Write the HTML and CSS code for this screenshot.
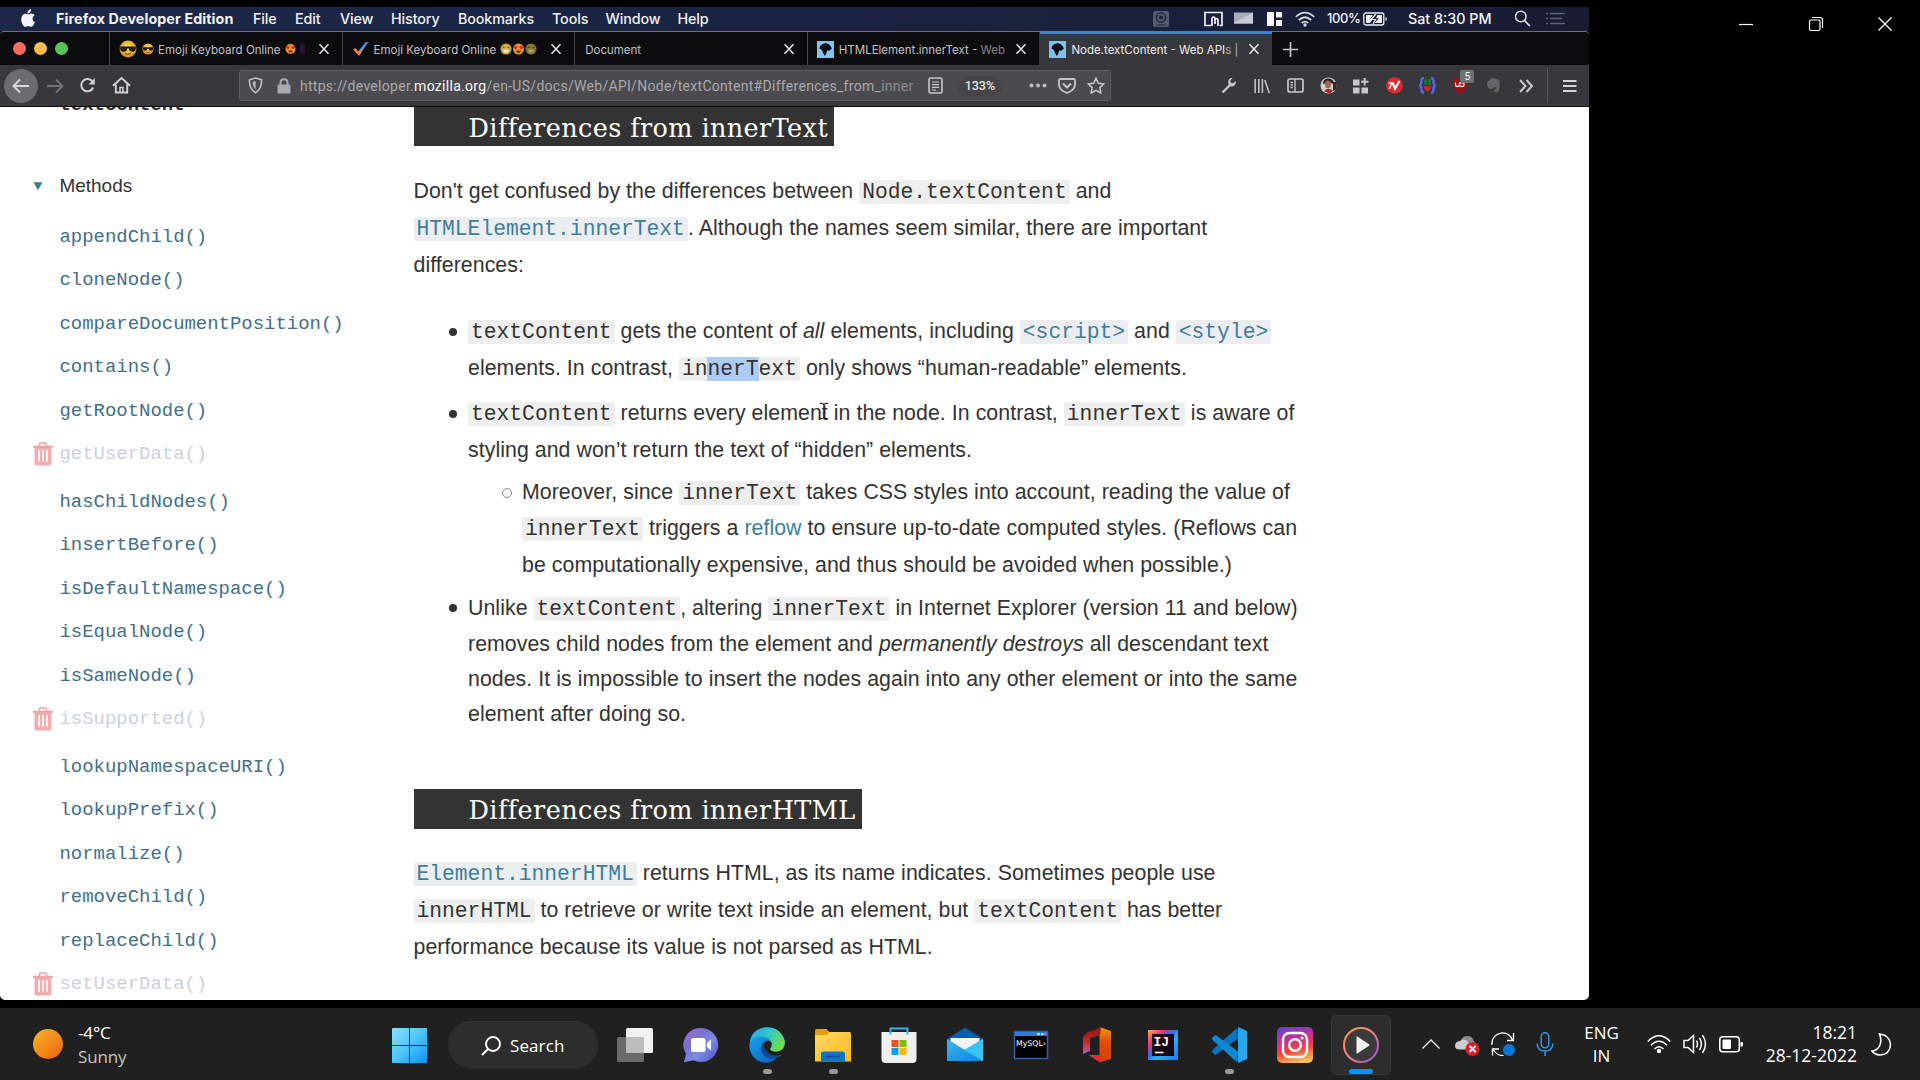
FILE: index.html
```html
<!DOCTYPE html>
<html lang="en">
<head>
<meta charset="utf-8">
<title>Node.textContent - Web APIs | MDN</title>
<link rel="stylesheet" href="styles.css">
</head>
<body>
<svg class="defs" width="0" height="0" aria-hidden="true">
  <defs>
    <radialGradient id="gFace" cx=".5" cy=".4" r=".6"><stop offset="0" stop-color="#ffe26a"/><stop offset="1" stop-color="#d98a1c"/></radialGradient>
    <linearGradient id="gSun" x1="0" y1="0" x2="1" y2="1"><stop offset="0" stop-color="#f5b62b"/><stop offset="1" stop-color="#f0620c"/></linearGradient>
    <linearGradient id="gWin" x1="0" y1="0" x2="1" y2="1"><stop offset="0" stop-color="#8be0fb"/><stop offset=".5" stop-color="#4cc5fb"/><stop offset="1" stop-color="#0b93f8"/></linearGradient>
    <linearGradient id="gChat" x1="0" y1="0" x2="1" y2="1"><stop offset="0" stop-color="#9d6fb5"/><stop offset=".35" stop-color="#7a70d0"/><stop offset=".6" stop-color="#7b8ae8"/><stop offset="1" stop-color="#4b4fc0"/></linearGradient>
    <linearGradient id="gEdge1" x1="0" y1="0" x2="1" y2=".5"><stop offset="0" stop-color="#2b9fe6"/><stop offset=".5" stop-color="#2fc4d4"/><stop offset="1" stop-color="#6be04e"/></linearGradient>
    <linearGradient id="gEdge2" x1="0" y1="0" x2="1" y2="1"><stop offset="0" stop-color="#1ba0e8"/><stop offset="1" stop-color="#0a5fc0"/></linearGradient>
    <linearGradient id="gFold" x1="0" y1="0" x2="1" y2="1"><stop offset="0" stop-color="#ffd768"/><stop offset="1" stop-color="#f9bb17"/></linearGradient>
    <linearGradient id="gMail" x1="0" y1="0" x2="1" y2="1"><stop offset="0" stop-color="#39b8ee"/><stop offset="1" stop-color="#1083da"/></linearGradient>
    <linearGradient id="gOff" x1="0" y1="0" x2="0" y2="1"><stop offset="0" stop-color="#f79a0a"/><stop offset=".4" stop-color="#e0500a"/><stop offset="1" stop-color="#d83b01"/></linearGradient>
    <linearGradient id="gOff2" x1="0" y1="0" x2="0" y2="1"><stop offset="0" stop-color="#8f1010"/><stop offset=".6" stop-color="#c4302f"/><stop offset="1" stop-color="#b565b8"/></linearGradient>
    <linearGradient id="gIJ" x1="0" y1="0" x2="1" y2="1"><stop offset="0" stop-color="#ffb03a"/><stop offset=".25" stop-color="#fb2d7c"/><stop offset=".45" stop-color="#2f6cf6"/><stop offset=".6" stop-color="#1fb2f5"/><stop offset="1" stop-color="#1f78f0"/></linearGradient>
    <linearGradient id="gIG" x1=".3" y1="0" x2=".55" y2="1"><stop offset="0" stop-color="#6b42cf"/><stop offset=".35" stop-color="#c9308f"/><stop offset=".65" stop-color="#f0453f"/><stop offset="1" stop-color="#fdc24f"/></linearGradient>
    <linearGradient id="gRing" x1="0" y1="0" x2="1" y2="1"><stop offset="0" stop-color="#ff9a3c"/><stop offset=".5" stop-color="#e8808a"/><stop offset="1" stop-color="#8a55cf"/></linearGradient>
    <linearGradient id="gTick" x1="0" y1="1" x2="1" y2="0"><stop offset="0" stop-color="#f0643c"/><stop offset=".4" stop-color="#e8875a"/><stop offset=".6" stop-color="#4a8fe8"/><stop offset="1" stop-color="#3b82f0"/></linearGradient>
    <symbol id="x" viewBox="0 0 12 12"><path d="M1.5 1.2l9 9.6M10.5 1.2l-9 9.6" stroke="#e8e8ea" stroke-width="1.5" fill="none"/></symbol>
    <symbol id="cool" viewBox="0 0 18 18"><circle cx="9" cy="9" r="8.4" fill="url(#gFace)"/><path d="M1.2 6.5h15.6v2.3q-.6 3-3.4 3T9.8 8.6H8.2q-.4 3.2-3.6 3.2t-3.4-3z" fill="#1d1b1a"/><path d="M6 13.6q3 1.4 6 0" stroke="#7a3d10" fill="none"/></symbol>
    <symbol id="love" viewBox="0 0 12 12"><circle cx="6" cy="6" r="5.5" fill="#e29a2c"/><path d="M.8 3.6Q2.8 1.6 3.4 3.4 5.3 2.4 5 4.4 4.4 6 2.9 6.4 1 5.6.8 3.6zM11.2 3.6Q9.2 1.6 8.6 3.4 6.7 2.4 7 4.4 7.6 6 9.1 6.4 11 5.6 11.2 3.6z" fill="#e8262d"/><path d="M3.5 7.6h5Q8 10 6 10T3.5 7.6z" fill="#6b2a10"/></symbol>
    <symbol id="laugh" viewBox="0 0 12 12"><circle cx="6" cy="6" r="5.5" fill="#dcaa3a"/><path d="M2.6 4.6q1-1 2 0M7.4 4.6q1-1 2 0" stroke="#5b3a10" fill="none"/><path d="M3 6.6h6Q8.6 9.8 6 9.8T3 6.6z" fill="#f1e7d0"/><path d="M.4 6.5L3 5.8 1.8 9zM11.6 6.5L9 5.8 10.2 9z" fill="#5aa7c8"/></symbol>
    <symbol id="mdn" viewBox="0 0 17 17"><path d="M0 0h17v17H0z" fill="#7ec4ea"/><path d="M2.4 7.6Q3 3 8 2.2q5.400 0 6.800 5.600l-2.800 1.900-1.700-.3-1 3-1.500 2.600-2-3.200-.6-2.500z" fill="#0c0d1c"/></symbol>
    <symbol id="trash" viewBox="0 0 20 24"><path d="M1.500 5h17v16.500q0 2-2 2h-13q-2 0-2-2z" fill="#f1acae"/><path d="M0 3.800h20v2H0z" fill="#eda3a5"/><path d="M6.500 4V2.200Q6.500 1 7.700 1h4.600q1.200 0 1.200 1.200V4" stroke="#eda3a5" stroke-width="1.600" fill="none"/><path d="M6 8v11.500M10 8v11.500M14 8v11.500" stroke="#fff" stroke-width="1.700"/></symbol>
  </defs>
</svg>

<div class="screen">
<main class="stage">
  <section class="mac">
    <header class="menubar">
      <svg class="apple" width="16" height="18" viewBox="0 0 16 18"><path d="M11 0q.2 2-1 3.300T7.400 4.500Q7.300 2.700 8.500 1.500T11 0zM8 5.300q.9 0 2-.5 2.900-.8 4.500 1.500-2 1.400-1.900 3.500.1 2.400 2.300 3.400-.8 2.200-2.200 3.900-1.200 1.200-2.800.4-1.700-.8-3.200 0-1.700.8-2.800-.3Q1.600 14.700 1.300 11.800.8 8 2.800 5.900 4.500 4.300 6.500 5q1 .3 1.500.3z" fill="#f4f5f8"/></svg>
      <strong class="app">Firefox Developer Edition</strong>
      <nav class="menus"><span>File</span><span>Edit</span><span>View</span><span>History</span><span>Bookmarks</span><span>Tools</span><span>Window</span><span>Help</span></nav>
      <div class="status">
        <svg width="18" height="18" viewBox="0 0 18 18"><rect x="1" y="1" width="16" height="16" rx="2.500" fill="#565b6e"/><circle cx="9" cy="7.500" r="4.600" fill="none" stroke="#1d243e" stroke-width="1.400"/><circle cx="9" cy="7.500" r="2" fill="#1d243e"/><path d="M4 15h10" stroke="#1d243e"/></svg>
        <svg width="20" height="16" viewBox="0 0 20 16"><path d="M7 14.500H1V1.500h17v13h-2.500M8 15V8q0-2 1.500-2T11 8v5M11 9q0-1.500 1.500-1.500T14 9v6" fill="none" stroke="#f2f3f7" stroke-width="1.700"/></svg>
        <svg width="20" height="12" viewBox="0 0 20 12"><rect width="19" height="11" y=".5" fill="#a9acb8"/><path d="M0 11L19 .5V11.500H0z" fill="#c9cbd4"/></svg>
        <svg width="16" height="16" viewBox="0 0 16 16"><path d="M0 1h7v14H0zM9 1h6v5.500H9zM9 9h6v6H9z" fill="#fafafc"/></svg>
        <svg width="20" height="16" viewBox="0 0 20 16"><path d="M.8 5.800Q10-2.600 19.200 5.800M3.800 9Q10 3.500 16.200 9M6.800 12Q10 9.200 13.200 12" fill="none" stroke="#d5d8e2" stroke-width="1.700"/><circle cx="10" cy="14" r="1.700" fill="#d5d8e2"/></svg>
        <span class="pct">100%</span>
        <svg width="25" height="14" viewBox="0 0 25 14"><rect x=".8" y="1" width="20" height="12" rx="2" fill="none" stroke="#eceef4" stroke-width="1.300"/><path d="M3 3h7L6.500 8h2.700L7 11H3zM14.500 3h4.500v8h-7.500L16 6.200h-3z" fill="#eceef4"/><path d="M13 2L8 7.500h4.500L10 12" fill="none" stroke="#eceef4" stroke-width="1.200"/><path d="M22.500 5v4q1.500-.5 1.500-2t-1.500-2z" fill="#eceef4"/></svg>
        <span class="clock">Sat 8:30 PM</span>
        <svg width="17" height="17" viewBox="0 0 17 17"><circle cx="6.800" cy="6.500" r="5.300" fill="none" stroke="#e3e5ec" stroke-width="1.500"/><path d="M10.500 10.500l5.300 5.500" stroke="#e3e5ec" stroke-width="1.800"/></svg>
        <svg width="20" height="13" viewBox="0 0 20 13"><path d="M4 1.500h15M4 6.500h12M4 11.500h15M0 1.500h2M0 6.500h2M0 11.500h2" stroke="#5c6175" stroke-width="1.500"/></svg>
      </div>
    </header>

    <div class="tabs">
      <div class="lights"><i class="red"></i><i class="amber"></i><i class="green"></i></div>
      <div class="tab"><svg width="18" height="18"><use href="#cool"/></svg><svg class="mini" width="12" height="12"><use href="#cool"/></svg><span class="label">Emoji Keyboard Online</span><svg class="mini2" width="11" height="12" viewBox="0 0 12 12"><use href="#love"/></svg><svg width="10" height="12" viewBox="0 0 10 12"><rect x="4" y="1" width="5" height="10" fill="#2c1030"/></svg><svg class="close" width="12" height="12"><use href="#x"/></svg></div>
      <div class="tab"><svg width="17" height="16" viewBox="0 0 17 16"><path d="M1 8.500l2.500-1.500 2.800 3.500L13.500 1h3L7 15z" fill="url(#gTick)"/></svg><span class="label">Emoji Keyboard Online</span><svg class="trio" width="40" height="12" viewBox="0 0 40 12"><use href="#laugh" width="12" height="12"/><use href="#love" x="12.500" width="12" height="12"/><g opacity=".65"><use href="#laugh" x="25" width="12" height="12"/></g></svg><svg class="close" width="12" height="12"><use href="#x"/></svg></div>
      <div class="tab"><span class="label doc">Document</span><svg class="close" width="12" height="12"><use href="#x"/></svg></div>
      <div class="tab"><svg width="17" height="17"><use href="#mdn"/></svg><span class="label wide">HTMLElement.innerText - <span class="dim">Web</span></span><svg class="close" width="12" height="12"><use href="#x"/></svg></div>
      <div class="tab active"><svg width="17" height="17"><use href="#mdn"/></svg><span class="label wide">Node.textContent - Web API<span class="dim">s |</span></span><svg class="close" width="12" height="12"><use href="#x"/></svg></div>
      <svg class="plus" width="15" height="15" viewBox="0 0 15 15"><path d="M7.500 0v15M0 7.500h15" stroke="#c4c4c8" stroke-width="1.700"/></svg>
    </div>

    <div class="toolbar">
      <div class="back"><svg width="18" height="16" viewBox="0 0 18 16"><path d="M17 8H2M8 1.500L1.500 8 8 14.500" fill="none" stroke="#d8d8dc" stroke-width="2"/></svg></div>
      <div class="tb"><svg width="18" height="16" viewBox="0 0 18 16"><path d="M1 8h15M10 1.500L16.500 8 10 14.500" fill="none" stroke="#727277" stroke-width="1.900"/></svg></div>
      <div class="tb"><svg width="17" height="17" viewBox="0 0 17 17"><path d="M14.200 10.500A6.200 6.200 0 1 1 13.500 4.500" fill="none" stroke="#d0d0d4" stroke-width="2"/><path d="M15.800 1v6.500H9.500z" fill="#d0d0d4"/></svg></div>
      <div class="tb"><svg width="19" height="17" viewBox="0 0 19 17"><path d="M1 8.800L9.500 1 18 8.800M3.800 7.500V15.500h11.400V7.500" fill="none" stroke="#d0d0d4" stroke-width="1.900"/><path d="M8 15v-4.500h3V15" fill="none" stroke="#d0d0d4" stroke-width="1.500"/></svg></div>
      <div class="url">
        <svg class="shield" width="15" height="17" viewBox="0 0 15 17"><path d="M7.500 1l6 1.800q.5 9-6 13-6.500-4-6-13z" fill="none" stroke="#c2c2c6" stroke-width="1.600"/><path d="M7.500 4v8.500Q5 10 4.600 5z" fill="#c2c2c6"/></svg>
        <svg class="lock" width="14" height="16" viewBox="0 0 14 16"><rect x=".5" y="6.500" width="13" height="9" rx="1.300" fill="#aaaaae"/><path d="M3.500 7V4.500Q3.500 1.200 7 1.200t3.500 3.300V7" fill="none" stroke="#aaaaae" stroke-width="1.900"/></svg>
        <span class="addr">https://developer.<b>mozilla.org</b>/en-US/docs/Web/API/Node/textContent#Differences_from_<span class="fade">inner</span></span>
        <svg class="reader" width="15" height="17" viewBox="0 0 15 17"><rect x="1" y="1" width="13" height="15" rx="1.500" fill="none" stroke="#c6c6ca" stroke-width="1.600"/><path d="M4 5h7M4 7.700h7M4 10.400h7M4 13h4" stroke="#c6c6ca" stroke-width="1.200"/></svg>
        <span class="zoom">133%</span>
        <svg class="dots" width="18" height="5" viewBox="0 0 18 5"><g fill="#bcbcc0"><circle cx="2.500" cy="2.500" r="2"/><circle cx="9" cy="2.500" r="2"/><circle cx="15.500" cy="2.500" r="2"/></g></svg>
        <svg class="pocket" width="18" height="16" viewBox="0 0 18 16"><path d="M2.500 1h13q1.500 0 1.500 1.500V7q-.3 5-8 8Q1.300 12 1 7V2.500Q1 1 2.500 1z" fill="none" stroke="#c6c6ca" stroke-width="1.800"/><path d="M5 5.500l4 4 4-4" fill="none" stroke="#c6c6ca" stroke-width="2"/></svg>
        <svg width="18" height="17" viewBox="0 0 18 17"><path d="M9 1.200l2.300 5 5.500.6-4 3.800 1.100 5.400L9 13.300 4.100 16l1.100-5.400-4-3.800 5.500-.6z" fill="none" stroke="#c6c6ca" stroke-width="1.500"/></svg>
      </div>
      <div class="tools">
        <svg width="16" height="17" viewBox="0 0 16 17"><path d="M1.500 15.500L9 8" stroke="#c8c8cc" stroke-width="2.400"/><path d="M14.800 4L12 6.300 9.900 5.800 9.300 3.700 11.500 1Q7.500.8 7.200 4.500L7.600 8 9.500 9.500Q15.500 9.500 14.800 4z" fill="#c8c8cc"/></svg>
        <svg width="16" height="16" viewBox="0 0 16 16"><path d="M1.200 1v14M4.800 1v14M8.400 1v14M10.800 2l4.400 13" stroke="#c0c0c4" stroke-width="1.600"/></svg>
        <svg width="17" height="15" viewBox="0 0 17 15"><rect x="1" y="1" width="15" height="13" rx="2" fill="none" stroke="#c8c8cc" stroke-width="1.700"/><path d="M8 1v13M3.500 4.500h2.300M3.500 7h2.300M3.500 9.500h2.300" stroke="#c8c8cc" stroke-width="1.300"/></svg>
        <svg width="17" height="17" viewBox="0 0 17 17"><circle cx="8.500" cy="8.500" r="8" fill="#d3d0c8"/><path d="M3 7Q3 1 9 1.500q5 .5 5 6L10 5.500z" fill="#2b201c"/><ellipse cx="8" cy="7.500" rx="3" ry="4" fill="#9a6b50"/><path d="M4.500 14.500Q5 11.500 9 12l4 1.500-3 3z" fill="#a81e24"/><path d="M13 5h3.500v7L13 14z" fill="#3b2a22"/></svg>
        <svg width="16" height="16" viewBox="0 0 16 16"><path d="M0 1.500h6.500v6H0zM0 9.500h6.500v6H0zM8.500 9.500H15v6H8.500z" fill="#c8c8cc"/><path d="M11.700 0v7.500M8 3.700h7.500" stroke="#c8c8cc" stroke-width="2"/></svg>
        <svg width="17" height="17" viewBox="0 0 17 17"><circle cx="8.500" cy="8.500" r="8.300" fill="#dc2c34"/><path d="M2.500 5.800h3.300L5 8l-.8 3H2.500" fill="none" stroke="#fff" stroke-width="1.200"/><path d="M6.500 5.500l2.500 6 4.500-7.500" fill="none" stroke="#fff" stroke-width="2.200"/></svg>
        <svg width="17" height="17" viewBox="0 0 17 17"><path d="M5 1Q2.500 1 2.500 4T1.200 8.500q1.300 1 1.300 4T5 16M12 1q2.500 0 2.500 3t1.300 4.500q-1.300 1-1.300 4T12 16" fill="none" stroke="#5a62e6" stroke-width="2.600"/><path d="M5.200 2h2.600v6H5.200zM9.200 2h2.600v6H9.200z" fill="#1a7a30"/><path d="M5 9.500q1.800-1.500 3.500.3 1.700-1.800 3.500-.3.500 2.500-3.500 5Q4.500 12 5 9.500z" fill="#e02028"/></svg>
        <div class="ublock"><svg width="16" height="17" viewBox="0 0 16 17"><path d="M8 .6l7.300 2.200Q16 12.500 8 16.500 0 12.500.7 2.800z" fill="#a30d15"/><path d="M3.500 5.500v2q0 2 2 2t2-2v-2M7.500 7.500q0 2 2.300 2t2.200-2q0-2-2.200-2t-2.300 2z" fill="none" stroke="#f3e4e5" stroke-width="1.300"/></svg><span class="badge">5</span></div>
        <svg width="15" height="17" viewBox="0 0 15 17"><path d="M1 5.500L5 1.500q3-1 4.500.5l3.500.7q1.500 3.500.5 8.300-.7 4-3 4.300-3-.3-2.200-3h2.200l-.3-2.200-2.700.4Q6 13 3.500 12 1 10 1 5.500z" fill="#64656a"/></svg>
        <svg width="15" height="14" viewBox="0 0 15 14"><path d="M1 1l5.500 6L1 13M7.500 1L13 7l-5.500 6" fill="none" stroke="#c8c8cc" stroke-width="2"/></svg>
      </div>
      <div class="burger"><svg width="14" height="14" viewBox="0 0 14 14"><path d="M0 2h13.500M0 7h13.500M0 12h13.500" stroke="#d4d4d8" stroke-width="2"/></svg></div>
    </div>

    <div class="page">
      <aside class="sidebar">
        <div class="row current">textContent</div>
        <div class="row group"><i class="tri"></i>Methods</div>
        <div class="row">appendChild()</div>
        <div class="row">cloneNode()</div>
        <div class="row">compareDocumentPosition()</div>
        <div class="row">contains()</div>
        <div class="row">getRootNode()</div>
        <div class="row old"><svg width="20" height="24"><use href="#trash"/></svg>getUserData()</div>
        <div class="row">hasChildNodes()</div>
        <div class="row">insertBefore()</div>
        <div class="row">isDefaultNamespace()</div>
        <div class="row">isEqualNode()</div>
        <div class="row">isSameNode()</div>
        <div class="row old"><svg width="20" height="24"><use href="#trash"/></svg>isSupported()</div>
        <div class="row">lookupNamespaceURI()</div>
        <div class="row">lookupPrefix()</div>
        <div class="row">normalize()</div>
        <div class="row">removeChild()</div>
        <div class="row">replaceChild()</div>
        <div class="row old"><svg width="20" height="24"><use href="#trash"/></svg>setUserData()</div>
      </aside>
      <article class="article">
        <h3>Differences from innerText</h3>
        <p>Don't get confused by the differences between <code>Node.textContent</code> and<br><code class="link">HTMLElement.innerText</code>. Although the names seem similar, there are important<br>differences:</p>
        <ul class="list">
          <li><code>textContent</code> gets the content of <em>all</em> elements, including <code class="link">&lt;script&gt;</code> and <code class="link">&lt;style&gt;</code><br>elements. In contrast, <code>in<span class="sel">nerT</span>ext</code> only shows “human-readable” elements.</li>
          <li><code>textContent</code> returns every element<svg class="ibeam" width="10" height="18" viewBox="0 0 10 18"><path d="M1 1.500Q5 1 5 3.500q0-2.500 4-2M1 16.500q4 .5 4-2 0 2.500 4 2M5 3v12M3.500 11h3" fill="none" stroke="#222" stroke-width="1.200"/></svg> in the node. In contrast, <code>innerText</code> is aware of<br>styling and won’t return the text of “hidden” elements.
            <ul class="sub"><li>Moreover, since <code>innerText</code> takes CSS styles into account, reading the value of<br><code>innerText</code> triggers a <span class="link">reflow</span> to ensure up-to-date computed styles. (Reflows can<br>be computationally expensive, and thus should be avoided when possible.)</li></ul>
          </li>
          <li>Unlike <code>textContent</code>, altering <code>innerText</code> in Internet Explorer (version 11 and below)<br>removes child nodes from the element and <em>permanently destroys</em> all descendant text<span class="tight">nodes. It is impossible to insert the nodes again into any other element or into the same<br>element after doing so.</span></li>
        </ul>
        <h3 class="second">Differences from innerHTML</h3>
        <p><code class="link">Element.innerHTML</code> returns HTML, as its name indicates. Sometimes people use<br><code>innerHTML</code> to retrieve or write text inside an element, but <code>textContent</code> has better<br>performance because its value is not parsed as HTML.</p>
      </article>
    </div>
  </section>

  <div class="winctl">
    <svg width="16" height="16" viewBox="0 0 16 16"><path d="M1 8.500h14" stroke="#fff" stroke-width="1.200"/></svg>
    <svg width="16" height="16" viewBox="0 0 16 16"><rect x="1.500" y="4" width="10.500" height="10.500" rx="1.500" fill="none" stroke="#fff" stroke-width="1.200"/><path d="M4 1.500h8q2.500 0 2.500 2.500v8" fill="none" stroke="#fff" stroke-width="1.200"/></svg>
    <svg width="16" height="16" viewBox="0 0 16 16"><path d="M1.500 1.500l13 13M14.500 1.500l-13 13" stroke="#fff" stroke-width="1.300"/></svg>
  </div>
</main>

<footer class="taskbar">
  <div class="weather"><svg width="30" height="30"><circle cx="15" cy="15" r="15" fill="url(#gSun)"/></svg><div><div>-4°C</div><div class="sub2">Sunny</div></div></div>
  <svg class="start" width="35" height="35" viewBox="0 0 35 35"><path d="M1 0h16v17H0V1q0-1 1-1zM18 0h16q1 0 1 1v16H18zM0 18h17v17H1q-1 0-1-1zM18 18h17v16q0 1-1 1H18z" fill="url(#gWin)"/></svg>
  <div class="search"><svg width="20" height="20" viewBox="0 0 20 20"><circle cx="12" cy="8" r="7" fill="none" stroke="#fff" stroke-width="1.900"/><path d="M7 13L1 19" stroke="#fff" stroke-width="2.200"/></svg><span>Search</span></div>
  <div class="apps">
    <div class="app"><svg viewBox="0 0 36 36"><rect x="9" y="1" width="27" height="25" rx="1.500" fill="#f2f2f2"/><rect y="10" width="27" height="25" rx="1.500" fill="#6a6a6a"/><path d="M9 10h18v16H9z" fill="#bdbdbd"/></svg></div>
    <div class="app"><svg viewBox="0 0 36 36"><path d="M18 1a17 17 0 1 1-7.500 32.200L.8 35.300 3 27A17 17 0 0 1 18 1z" fill="url(#gChat)"/><rect x="8" y="11" width="14.500" height="14" rx="2.500" fill="#fff"/><path d="M24 16l4-3.500v11L24 20z" fill="#fff"/></svg></div>
    <div class="app"><svg viewBox="0 0 36 36"><path d="M.5 16.500Q2 2 17 0.200 32 0 35.800 14q1 9.500-8.300 10.700-6-.2-6.500-3 2.500-3 1.500-6Q20 11 13 11 4 11 .5 16.500z" fill="url(#gEdge1)"/><path d="M.3 17.500Q3.500 8.800 13 9.500q7.500 1 9 5-4-2-7.500 1.500-3.500 4-.5 9.500 4 6.500 13.500 5.500Q23 36 17 35.800 1 34 .3 17.500z" fill="url(#gEdge2)"/><path d="M14.500 16q-4.500 4.500-1.500 10 4.500 7 12 5.500 6-1 8.500-4.500-7 3-12.500.3Q15 24 14.500 16z" fill="#124a94"/></svg><i></i></div>
    <div class="app"><svg viewBox="0 0 36 36"><path d="M0 4q0-2 2-2h9.500L15 5.500h20v4H0z" fill="#e3a008"/><path d="M0 8h12l3-3h19.500Q36 5 36 7v27.500H0z" fill="url(#gFold)"/><path d="M6 34.500V27q0-2.500 3-2.500h18q3 0 3 2.500v7.500z" fill="#0f74cc"/><path d="M11 29.500h14" stroke="#0a4e94" stroke-width="1.800"/></svg><i></i></div>
    <div class="app"><svg viewBox="0 0 36 36"><path d="M.5 5h35v27q0 4-4 4h-27q-4 0-4-4z" fill="#efefef"/><path d="M9.500 7.500v-6h17v6" fill="none" stroke="#36b7ea" stroke-width="2"/><path d="M10.500 13h7v7h-7z" fill="#f1511b"/><path d="M18.500 13h7v7h-7z" fill="#80bb0a"/><path d="M10.500 21h7v7h-7z" fill="#06a4ee"/><path d="M18.500 21h7v7h-7z" fill="#fbb90c"/></svg></div>
    <div class="app"><svg viewBox="0 0 36 36"><path d="M0 12L18 .5 36 12v10H0z" fill="#0b5cae"/><path d="M3.500 11h29v12H3.500z" fill="#f3f3f3"/><path d="M0 12l18 11L36 12v22H0z" fill="url(#gMail)"/><path d="M36 12L17 23l19 11z" fill="#37c4f5"/></svg></div>
    <div class="app"><svg viewBox="0 0 36 36"><rect x="1.500" y="4.500" width="33" height="27" fill="#000" stroke="#2f5fae" stroke-width="1.500"/><path d="M2 5h32v4H2z" fill="#2a7de0"/><path d="M24 6h3v2h-3zM28 6h2.500v2H28z" fill="#cfe0f5"/><path d="M31 6h2.500v2H31z" fill="#e8663c"/><text x="3" y="18.500" class="mysql">MySQL›</text></svg></div>
    <div class="app"><svg viewBox="0 0 36 36"><path d="M20.500 0L32 4v28l-11.500 3.500z" fill="url(#gOff)"/><path d="M22 0L8 5.500 4 10v17l7-3V11l10-3z" fill="url(#gOff2)"/><path d="M9.500 28H21v7.500z" fill="#e8273c"/></svg></div>
    <div class="app"><svg viewBox="0 0 36 36"><path d="M3 3h30v30H3z" fill="url(#gIJ)"/><path d="M7 7h22v22H7z" fill="#1a0613"/><text x="8.500" y="18.500" class="ij">IJ</text><path d="M10 25.500h8.500" stroke="#fff" stroke-width="1.600"/></svg></div>
    <div class="app"><svg viewBox="0 0 36 36"><path d="M26 1L2 22.500q-2 2 0 3.500l1.500 1.300q1 .7 2.200 0L27 11.500z" fill="#0b74bd"/><path d="M26 35.200L2 13.500q-2-2 0-3.500l1.500-1.300q1-.7 2.200 0L27 24.500z" fill="#1088d2"/><path d="M27 0l9 4v28l-9 4z" fill="#26a7f0"/></svg><i></i></div>
    <div class="app"><svg viewBox="0 0 36 36"><rect width="36" height="36" rx="5" fill="url(#gIG)"/><rect x="6" y="6" width="24" height="24" rx="6.500" fill="none" stroke="#fff" stroke-width="2.400"/><circle cx="18" cy="18" r="5.800" fill="none" stroke="#fff" stroke-width="2.400"/><circle cx="25" cy="11" r="1.600" fill="#fff"/></svg></div>
    <div class="app on"><svg viewBox="0 0 36 36"><circle cx="18" cy="18" r="17" fill="#3a3a3c" stroke="url(#gRing)" stroke-width="2"/><path d="M13.500 9.800q0-.8.800-.4L26 17.200q1 .8 0 1.600L14.300 26.500q-.8.400-.8-.4z" fill="#f1f1f1"/></svg><i></i></div>
  </div>
  <div class="tray">
    <svg class="chev" width="18" height="10" viewBox="0 0 18 10"><path d="M.5 9.500L9 1l8.500 8.500" fill="none" stroke="#fff" stroke-width="1.300"/></svg>
    <svg width="24" height="24" viewBox="0 0 24 24"><path d="M6 9q1-5 6.500-5 5 0 6.500 5.500 2 1 2 4H6z" fill="#8a8a8a"/><path d="M0 14q0-4.500 5-5 4-3 8 .5l3 8H5q-5 0-5-3.500z" fill="#cdcdcd"/><circle cx="17.500" cy="17" r="7" fill="#d32029"/><path d="M14.500 14l6 6M20.500 14l-6 6" stroke="#fff" stroke-width="1.800"/></svg>
    <svg width="24" height="24" viewBox="0 0 24 24"><path d="M.8 13Q.5 2.500 11 .8q7.500-.3 10.500 7.200M22.500 1v7.500H16M1.500 23.500V17H8M2.500 18q4 6 10 5.500" fill="none" stroke="#fff" stroke-width="1.300"/><circle cx="18" cy="18" r="6" fill="#0a78d6"/></svg>
    <svg class="mic" width="18" height="24" viewBox="0 0 18 24"><rect x="5.200" y=".8" width="7.600" height="15" rx="3.800" fill="none" stroke="#2f97ea" stroke-width="1.500"/><path d="M1 11.500Q1.500 19 9 19t8-7.500M9 19v5" fill="none" stroke="#2f97ea" stroke-width="1.500"/></svg>
    <div class="lang">ENG<br>IN</div>
    <svg width="24" height="20" viewBox="0 0 24 20"><path d="M.8 7.500Q12-4 23.200 7.500M4 11.300q8-8 16 0M7.500 15q4.500-4.500 9 0" fill="none" stroke="#fff" stroke-width="1.600"/><circle cx="12" cy="17" r="2.200" fill="#fff"/></svg>
    <svg width="24" height="20" viewBox="0 0 24 20"><path d="M1 6.500h4L10.500 1.500v17L5 13.500H1z" fill="none" stroke="#fff" stroke-width="1.500"/><path d="M13.500 6.500q2 3.500 0 7M16.500 4q3.800 6 0 12M19.500 1.200q6 8.800 0 17.600" fill="none" stroke="#fff" stroke-width="1.500"/></svg>
    <svg width="25" height="17" viewBox="0 0 25 17"><rect x=".8" y=".8" width="19.500" height="15" rx="3" fill="none" stroke="#fff" stroke-width="1.600"/><rect x="3.500" y="3.500" width="8.500" height="9.600" rx="1" fill="#fff"/><path d="M21.500 6h1.500q1 0 1 1v2.500q0 1-1 1h-1.500z" fill="#fff"/></svg>
    <div class="when">18:21<br>28-12-2022</div>
    <svg width="21" height="23" viewBox="0 0 21 23"><path d="M8.500 1q10 .8 11 10.500-.6 10-10.500 10.500-5.500-.3-8-4 5.500-.5 7.800-5.500Q11 7 8.500 1z" fill="none" stroke="#fff" stroke-width="1.600"/></svg>
  </div>
</footer>
</div>
</body>
</html>
```
FILE: styles.css
```css
* { box-sizing: border-box; }
body { margin: 0; background: #000; font-family: "Liberation Sans", Arial, sans-serif; overflow: hidden; }
svg { display: block; flex: none; }
.defs { position: absolute; }
.screen { width: 1920px; height: 1080px; display: flex; flex-direction: column; }
.stage { height: 1008px; display: flex; justify-content: space-between; align-items: flex-start; }

/* Shared desktop window */
.mac { width: 1589px; height: 993px; margin-top: 7px; display: flex; flex-direction: column; border-radius: 0 0 5px 5px; overflow: hidden; }

.menubar { height: 24px; flex: none; display: flex; align-items: center; padding: 0 0 1px 20px; background: linear-gradient(90deg, #1d2848, #1a2342 50%, #191c33); color: #f0f2f7; font: 500 14.3px/23px Inter, sans-serif; white-space: nowrap; }
.apple { margin-right: 20px; margin-top: -2px; }
.menubar .app { width: 198px; display: block; font-weight: 700; letter-spacing: .1px; }
.menus { display: grid; grid-template-columns: 42px 45px 51px 67px 94px 53.500px 72px 40px; letter-spacing: -.1px; margin-left: -1px; }
.status { margin-left: auto; margin-right: 23px; display: flex; align-items: center; }
.status svg:nth-child(1) { margin-right: 34px; }
.status svg:nth-child(2) { margin-right: 10px; }
.status svg:nth-child(3) { margin-right: 13px; margin-top: -2px; }
.status svg:nth-child(4) { margin-right: 12px; }
.status svg:nth-child(5) { margin-right: 12px; }
.pct { width: 36px; font-size: 13px; letter-spacing: -.4px; }
.clock { width: 106px; margin-left: 20px; }
.status svg:nth-child(9) { margin-right: 15px; }

.tabs { height: 34px; flex: none; display: flex; align-items: stretch; background: #0c0c0e; border-top: 1px solid #6d7079; border-radius: 4px 4px 0 0; }
.lights { width: 109px; padding-left: 13px; display: flex; align-items: center; gap: 8px; }
.lights i { width: 13px; height: 13px; border-radius: 50%; }
.red { background: #fb6a62; }
.amber { background: #fbbd4f; }
.green { background: #5cc155; }
.tab { width: 232.600px; display: flex; align-items: center; padding: 1px 12px 0 9px; border-left: 1px solid #4a4a4e; color: #c0c0c3; font: 11.500px/32px Inter, sans-serif; white-space: nowrap; }
.tab .close { margin-left: auto; }
.tab .label { margin-left: 5px; padding-top: 1px; }
.tab .doc { margin-left: 1px; }
.mini { margin-left: 5px; }
.tab .mini + .label { margin-left: 4px; }
.mini2, .trio { margin-left: 4px; }
.tab.active { background: #38383c; color: #eeeef0; border-left-color: #38383c; box-shadow: 0 -1px #2b86e4, inset 0 2px #2b86e4; }
.dim { opacity: .65; }
.plus { margin: 10px 0 0 11px; }

.toolbar { height: 42px; flex: none; display: flex; align-items: center; padding-left: 4px; background: #38383c; border-bottom: 1px solid #0a0a0c; }
.back { width: 34px; height: 34px; border-radius: 50%; background: #6b6b70; display: grid; place-items: center; }
.tb { width: 33.300px; display: grid; place-items: center; }
.url { width: 872px; height: 31px; margin-left: 101px; padding-left: 8px; display: flex; align-items: center; background: #4a4a4f; border: 1px solid #5c5c61; border-radius: 3px; }
.shield { margin-right: 7px; }
.lock { margin-left: 7px; }
.addr { width: 628px; margin-left: 9px; color: #a9a9ad; font: 14px/30px Roboto, sans-serif; white-space: nowrap; letter-spacing: .29px; }
.addr b { font-weight: 400; color: #fafafb; }
.fade { opacity: .7; }
.zoom { width: 44px; margin-left: 15px; height: 20px; border-radius: 10px; background: #454549; color: #e6e6e8; text-align: center; font: 500 12.500px/20px Roboto, sans-serif; }
.dots { margin-left: 27px; }
.pocket { margin: 0 11px; }
.tools { width: 330px; margin-left: 102px; display: grid; grid-template-columns: repeat(10, 33px); justify-items: center; align-items: center; }
.ublock { position: relative; }
.badge { position: absolute; left: 8px; top: -7px; width: 14px; height: 13px; background: #6f7175; border-radius: 2px; color: #fff; font: 10px/13px Roboto, sans-serif; text-align: center; }
.burger { height: 35px; margin-left: 4px; padding-left: 15px; border-left: 1px solid #59595d; display: flex; align-items: center; }

/* Documentation page */
.page { flex: 1; min-height: 0; display: flex; background: #fefefe; color: #333; overflow: hidden; }
.sidebar { width: 413.500px; flex: none; margin-top: -23.200px; }
.row { height: 43.400px; padding-left: 59.500px; color: #416f8d; font: 18.950px/43.400px "Liberation Mono", monospace; white-space: nowrap; }
.row.current { color: #333; font-weight: 700; margin-bottom: 36.300px; }
.row.group { display: flex; align-items: center; padding-left: 33.500px; margin-bottom: 9.200px; color: #333; font-family: "Liberation Sans", Arial, sans-serif; }
.tri { width: 17px; margin-right: 9px; }
.tri::before { content: ""; display: block; width: 9px; height: 8px; margin-top: 2px; background: #367d85; clip-path: polygon(0 0, 100% 0, 50% 100%); }
.row.old { height: 48px; padding-left: 33px; display: flex; gap: 6.500px; color: #cdd1d9; }
.row.old svg { margin-top: 9px; }

.article { flex: none; width: 920px; font-size: 21.300px; line-height: 36.600px; letter-spacing: .06px; white-space: nowrap; }
.article p { margin: 0; }
h3 { width: max-content; height: 39.400px; margin: 0 0 27px; padding: 2px 6px 0 55px; background: #333; color: #fff; font: 400 25.500px/38.400px "DejaVu Serif", serif; letter-spacing: .4px; }
h3.second { margin: 57.500px 0 26.800px; }
code { font: 21.300px/1 "Liberation Mono", monospace; letter-spacing: 0; padding: 0 3px; background: #eee; border-radius: 2px; }
.link { color: #3d7e9a; }
code.link { background: #ecedf1; }
.sel { background: #acccf6; }
.list { margin: 30.300px 0 0; padding: 0 0 0 54.500px; list-style: none; }
.list > li { position: relative; margin-bottom: 8.400px; }
.list > li:nth-child(2) { margin-bottom: 6px; }
.list > li:last-child { margin-bottom: 0; }
.list > li::before { content: ""; position: absolute; left: -19.500px; top: 14.500px; width: 8px; height: 8px; border-radius: 50%; background: #333; }
.sub { margin: 5.600px 0 0; padding: 0 0 0 54px; list-style: none; }
.sub li { position: relative; }
.sub li::before { content: ""; position: absolute; left: -20px; top: 14px; width: 8px; height: 8px; border-radius: 50%; border: 1px solid #888; }
.tight { display: block; line-height: 35px; margin-top: -1px; }
.ibeam { position: absolute; left: 350.500px; top: 7px; }

.winctl { display: grid; grid-template-columns: repeat(3, 69.500px); justify-items: center; margin-top: 16px; }

/* Taskbar */
.taskbar { height: 72px; display: flex; align-items: center; background: #202020; color: #fff; font: 17px/23px "Open Sans", "Noto Sans", sans-serif; }
.weather { width: 359px; margin-left: 33px; display: flex; align-items: center; gap: 15px; font-size: 17px; letter-spacing: -.15px; line-height: 24px; }
.weather > div { padding-top: 2px; }
.sub2 { color: #c4c4c4; }
.search { width: 150px; height: 48px; margin: 2px 4px 0 21px; padding-left: 33px; display: flex; align-items: center; gap: 9px; border-radius: 24px; background: #2d2d2d; border-top: 1px solid #363636; letter-spacing: .1px; }
.start { margin-top: 2px; }
.apps { display: grid; grid-template-columns: repeat(12, 66px); height: 72px; }
.apps .app { margin: 7px 3px 5px; display: flex; flex-direction: column; align-items: center; padding-top: 12px; border-radius: 6px; }
.apps .app svg { width: 36px; height: 36px; }
.apps .app i { width: 9px; height: 5px; margin-top: 6px; border-radius: 3px; background: #9a9a9a; }
.apps .on { background: #2d2d2d; border: 1px solid #383838; padding-top: 11px; }
.apps .on i { width: 24px; background: #0a90fb; }
.mysql { font: 7.800px "DejaVu Sans", sans-serif; fill: #fff; }
.ij { font: 700 13px "Liberation Mono", monospace; fill: #fff; }
.tray { display: flex; align-items: center; margin-left: 28px; white-space: nowrap; }
.tray svg { margin-right: 12px; }
.tray .chev { margin-right: 15px; }
.tray .mic { margin: 0 0 0 9px; }
.lang { width: 91px; margin-left: 2px; text-align: center; font-size: 17px; }
.when { width: 101px; text-align: right; margin-right: 14px; font-size: 17.500px; }
.tray svg:last-child { margin: 0; }
```
